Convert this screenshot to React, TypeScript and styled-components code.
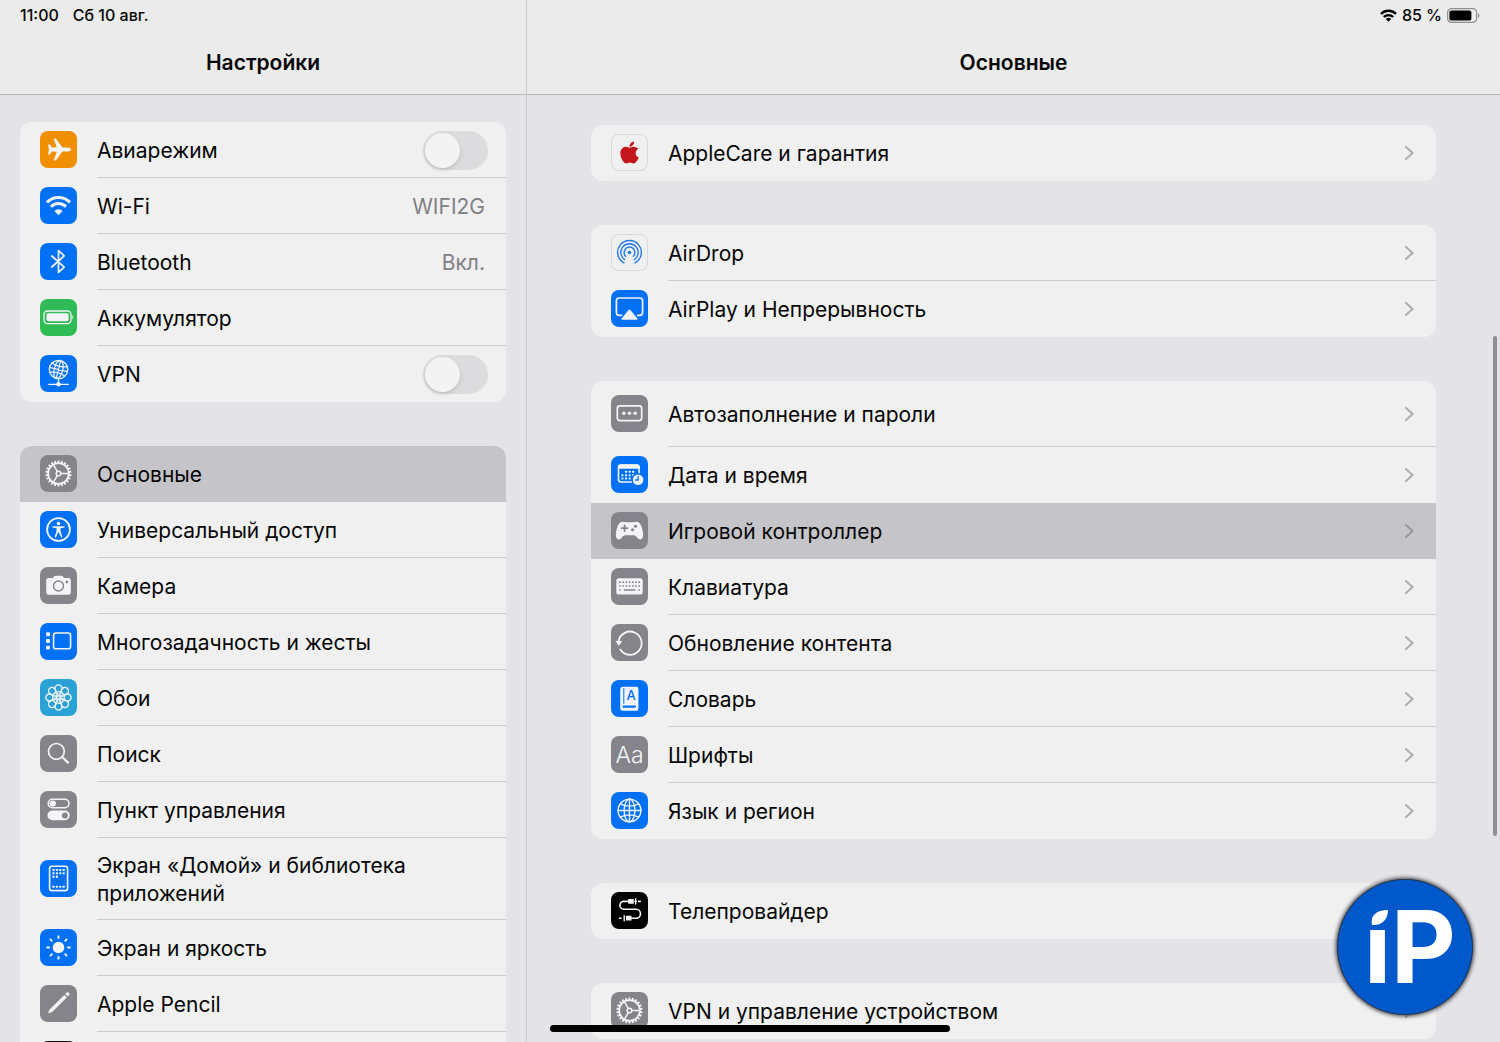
import React, { ReactNode } from "react";
import styled, { createGlobalStyle, css } from "styled-components";
import { FaApple } from "react-icons/fa";

const color = {
  page: "#e4e3e8",
  bar: "#eaebea",
  card: "#f0f0f0",
  selected: "#c5c4c9",
  line: "#cdcdcf",
  barLine: "#b9b9bc",
  text: "#060606",
  muted: "#808084",
  blue: "#0070f5",
  gray: "#85848a",
  orange: "#f08f00",
  green: "#2fbb55",
  cyan: "#2ba2d6",
  ink: "#f2f4f7",
};

const GlobalStyle = createGlobalStyle`
  *, *::before, *::after { box-sizing: border-box; }
  body {
    margin: 0;
    background: ${color.page};
    color: ${color.text};
    font-family: Inter, "Noto Sans", sans-serif;
    -webkit-font-smoothing: antialiased;
  }
`;

/* ---------- layout ---------- */

const Screen = styled.div`
  position: relative;
  display: grid;
  grid-template-columns: minmax(320px, 527px) minmax(0, 1fr);
  height: 100vh;
  overflow: hidden;
`;

const Pane = styled.section<{ $divided?: boolean }>`
  display: flex;
  flex-direction: column;
  min-width: 0;
  min-height: 0;
  ${(p) => p.$divided && css`border-right: 1px solid #c9c9cd;`}
`;

const PaneHeader = styled.header`
  flex: none;
  background: ${color.bar};
  border-bottom: 1px solid ${color.barLine};
`;

const StatusBar = styled.div<{ $end?: boolean }>`
  display: flex;
  align-items: center;
  justify-content: ${(p) => (p.$end ? "flex-end" : "flex-start")};
  gap: ${(p) => (p.$end ? 5 : 14)}px;
  height: 30px;
  padding: 0 20px;
  font-size: 16px;
  line-height: 20px;
  font-weight: 500;
  white-space: nowrap;
`;

const Title = styled.h1`
  margin: 0;
  padding-top: 2px;
  font-size: 21px;
  font-weight: 600;
  line-height: 62px;
  text-align: center;
`;

const PaneBody = styled.div<{ $wide?: boolean }>`
  flex: 1;
  min-height: 0;
  overflow: hidden;
  display: flex;
  flex-direction: column;
  gap: 44px;
  padding: ${(p) => (p.$wide ? "30px 64px 0" : "27px 20px 0")};
`;

const Group = styled.ul`
  flex: none;
  list-style: none;
  margin: 0;
  padding: 0;
  border-radius: 12px;
  background: ${color.card};
  overflow: hidden;
`;

/* ---------- rows ---------- */

const RowContent = styled.span<{ $tail: number }>`
  flex: 1;
  min-width: 0;
  display: flex;
  align-items: center;
  gap: 16px;
  padding-right: ${(p) => p.$tail}px;
  box-shadow: inset 0 -1px 0 ${color.line};
`;

const rowStyle = css<{ $selected?: boolean; $height: number; $plain?: boolean }>`
  display: flex;
  gap: 20px;
  min-height: ${(p) => p.$height}px;
  padding-left: 20px;
  color: inherit;
  text-decoration: none;
  background: ${(p) => (p.$selected ? color.selected : "transparent")};
  ${(p) => (p.$plain || p.$selected) && css`${RowContent} { box-shadow: none; }`}
`;

const LinkRow = styled.a`${rowStyle}`;
const SwitchRow = styled.label`${rowStyle}`;

const Label = styled.span`
  flex: 1;
  padding-top: 1px;
  font-size: 21px;
  line-height: 28px;
`;

const Value = styled.span`
  padding-top: 1px;
  font-size: 21px;
  line-height: 28px;
  color: ${color.muted};
`;

const Tile = styled.span<{ $bg: string }>`
  flex: none;
  align-self: center;
  display: grid;
  place-items: center;
  width: 37px;
  height: 37px;
  margin-bottom: 1px;
  overflow: hidden;
  border-radius: 8px;
  background: ${(p) => p.$bg};
  color: ${color.ink};
  ${(p) => p.$bg === color.card && css`box-shadow: inset 0 0 0 1px #d9d9dc;`}
`;

const FontSample = styled.span`
  font-size: 23px;
  font-weight: 300;
`;

const Switch = styled.input`
  appearance: none;
  flex: none;
  width: 65px;
  height: 39px;
  margin: 0;
  padding: 2px;
  border-radius: 20px;
  background: #dcdcde;
  &::before {
    content: "";
    display: block;
    width: 35px;
    height: 35px;
    border-radius: 50%;
    background: #f3f3f3;
    box-shadow: 0 2px 4px rgba(0, 0, 0, 0.14);
  }
  &:checked { background: ${color.green}; }
  &:checked::before { margin-left: auto; }
`;

/* ---------- overlays ---------- */

const ScrollThumb = styled.div`
  position: absolute;
  top: 336px;
  right: 3px;
  width: 4px;
  height: 500px;
  border-radius: 2px;
  background: #8f8f94;
`;

const HomeIndicator = styled.div`
  position: absolute;
  bottom: 10px;
  left: 50%;
  width: 400px;
  height: 7px;
  margin-left: -200px;
  border-radius: 4px;
  background: #000;
`;

const Badge = styled.div`
  position: absolute;
  right: 28px;
  bottom: 28px;
  width: 134px;
  height: 134px;
  border-radius: 50%;
  background: #0058cb;
  box-shadow: 0 0 0 1px #243550, 0 0 4px 2px #303338;
`;

/* ---------- icons ---------- */

const Glyph = ({ children, w = 1.6 }: { children: ReactNode; w?: number }) => (
  <svg width="37" height="37" viewBox="0 0 37 37" fill="none" stroke="currentColor" strokeWidth={w} strokeLinecap="round" strokeLinejoin="round" aria-hidden="true">
    {children}
  </svg>
);

const Solid = ({ d }: { d: string }) => <path d={d} fill="currentColor" stroke="none" />;

const dots = (points: number[][], size: number, fill = "currentColor") =>
  points.map(([x, y]) => (
    <rect key={`${x}-${y}`} x={x - size / 2} y={y - size / 2} width={size} height={size} rx={size / 4} fill={fill} stroke="none" />
  ));

const turns = (n: number) => Array.from({ length: n }, (_, i) => (360 / n) * i);

const Plane = () => (
  <Glyph>
    <Solid d="M31.2 18.5C31.2 17.2 28.8 16.4 26.6 16.4H22.4L16.4 8.2C16 7.7 15.6 7.5 15 7.5H13.6L16.8 16.3L12.1 16.5L9.7 13.5H8.1L8.9 18.5L8.1 23.5H9.7L12.1 20.5L16.8 20.7L13.6 29.5H15C15.6 29.5 16 29.3 16.4 28.8L22.4 20.6H26.6C28.8 20.6 31.2 19.8 31.2 18.5Z" />
  </Glyph>
);

const Wifi = () => (
  <Glyph w={3}>
    <path strokeLinecap="butt" d="M7 15.4A16.2 16.2 0 0 1 30 15.4M11 19.8A10.4 10.4 0 0 1 26 19.8" />
    <Solid d="M18.5 28.2L14.4 24A5.6 5.6 0 0 1 22.6 24Z" />
  </Glyph>
);

const Bluetooth = () => (
  <Glyph w={1.7}>
    <path d="M11.8 13L24.2 24.2L18.5 29.4V7.6L24.2 12.8L11.8 24" />
  </Glyph>
);

const Battery = () => (
  <Glyph w={1.3}>
    <rect x="4" y="12" width="27" height="12.6" rx="3.6" />
    <rect x="6.4" y="14.3" width="22.2" height="8" rx="1.6" fill="currentColor" stroke="none" />
    <Solid d="M32.3 16.3C33.7 16.8 33.7 19.8 32.3 20.3Z" />
  </Glyph>
);

const VpnGlobe = () => (
  <Glyph w={1.3}>
    <circle cx="18.5" cy="14.5" r="9.2" />
    <g transform="rotate(14 18.5 14.5)">
      <ellipse cx="18.5" cy="14.5" rx="4.3" ry="9.2" />
      <path d="M18.5 5.3V23.7M9.3 14.5H27.7M11 9.6Q18.5 12.8 26 9.6M11 19.4Q18.5 16.2 26 19.4" />
    </g>
    <path d="M18.5 24V29M8.8 29.3H28.3" />
    <circle cx="18.5" cy="29.3" r="2.3" fill="currentColor" stroke="none" />
  </Glyph>
);

const Gear = () => (
  <Glyph w={1.5}>
    <circle cx="18.5" cy="18.5" r="10.3" strokeWidth="1.7" />
    {turns(22).map((a) => (
      <path key={a} strokeLinecap="butt" strokeWidth="1.8" d="M18.5 8V5.4" transform={`rotate(${a} 18.5 18.5)`} />
    ))}
    <circle cx="18.5" cy="18.5" r="2.3" />
    {[90, 210, 330].map((a) => (
      <path key={a} d="M18.5 16V8.4" transform={`rotate(${a} 18.5 18.5)`} />
    ))}
  </Glyph>
);

const Accessibility = () => (
  <Glyph w={1.8}>
    <circle cx="18.5" cy="18.5" r="11.4" />
    <circle cx="18.5" cy="12.5" r="1.8" fill="currentColor" stroke="none" />
    <Solid d="M12.4 15.2L16.8 15.3H20.2L24.6 15.2V16.4L20.5 17.2V20L22.4 26.3L21.2 26.7L18.8 21.3H18.2L15.8 26.7L14.6 26.3L16.5 20V17.2L12.4 16.4Z" />
  </Glyph>
);

const Camera = () => (
  <Glyph>
    <Solid d="M8.4 10.9H12.6L14.1 9.3Q14.6 8.7 15.4 8.7H21.4Q22.2 8.7 22.7 9.3L24.2 10.9H28.6Q30.8 10.9 30.8 13.1V25.5Q30.8 27.7 28.6 27.7H8.4Q6.2 27.7 6.2 25.5V13.1Q6.2 10.9 8.4 10.9Z" />
    <circle cx="18.5" cy="19" r="5" stroke={color.gray} strokeWidth="1.4" />
    <circle cx="26.9" cy="14.9" r="1.3" fill={color.gray} stroke="none" />
  </Glyph>
);

const Multitask = () => (
  <Glyph>
    {dots([[8, 11.2], [8, 18], [8, 24.6]], 3.9)}
    <rect x="13.6" y="10" width="17" height="15.8" rx="2.4" />
  </Glyph>
);

const Flower = () => (
  <Glyph w={1.4}>
    {turns(8).map((a) => (
      <g key={a} transform={`rotate(${a} 18.5 18.5)`}>
        <circle cx="18.5" cy="9.4" r="3.5" />
        <path d="M18.5 17L16.4 12.4M18.5 17L20.6 12.4" strokeWidth="1" />
      </g>
    ))}
    <circle cx="18.5" cy="18.5" r="1.8" fill={color.cyan} />
  </Glyph>
);

const Search = () => (
  <Glyph w={1.7}>
    <circle cx="16.4" cy="16.4" r="7.9" />
    <path d="M22.4 22.2L28 27.6" strokeWidth="2.2" />
  </Glyph>
);

const Toggles = () => (
  <Glyph w={1.5}>
    <rect x="8.2" y="8.3" width="20.8" height="8.4" rx="4.2" />
    <circle cx="12.8" cy="12.5" r="3.1" fill="currentColor" stroke="none" />
    <rect x="7.5" y="19.6" width="22.2" height="9.6" rx="4.8" fill="currentColor" stroke="none" />
    <circle cx="24.9" cy="24.4" r="3" fill={color.gray} stroke="none" />
  </Glyph>
);

const HomeScreen = () => (
  <Glyph>
    <rect x="9.6" y="6.2" width="18" height="24.4" rx="2.4" />
    {dots([[13.5, 10], [16.9, 10], [20.3, 10], [23.7, 10], [13.5, 13.3], [16.9, 13.3], [20.3, 13.3], [23.7, 13.3], [13.5, 16.6], [16.9, 16.6], [13.5, 26.7], [16.9, 26.7], [20.3, 26.7], [23.7, 26.7]], 2.1)}
  </Glyph>
);

const Sun = () => (
  <Glyph w={1.9}>
    <circle cx="18.5" cy="18.5" r="5.8" fill="currentColor" stroke="none" />
    {turns(8).map((a) => (
      <path key={a} strokeLinecap="butt" d="M18.5 9.8V6.4" transform={`rotate(${a} 18.5 18.5)`} />
    ))}
  </Glyph>
);

const Pencil = () => (
  <Glyph>
    <Solid d="M8 28.6L9.6 24.6L24.3 9.9L26.8 12.4L12.1 27.1Z" />
    <Solid d="M25.2 9L26.6 7.6Q27.8 6.6 29 7.8Q30.1 9 29.1 10.1L27.7 11.5Z" />
  </Glyph>
);

const AirDrop = () => (
  <Glyph w={1.4}>
    <g stroke="#1f78ea">
      <path d="M12.9 28.9A11.9 11.9 0 1 1 24.1 28.9" />
      <path d="M13.6 25.6A8.7 8.7 0 1 1 23.4 25.6" />
      <path d="M14.7 22.3A5.4 5.4 0 1 1 22.3 22.3" />
      <circle cx="18.5" cy="18.5" r="1.8" fill="#1f78ea" stroke="none" />
    </g>
  </Glyph>
);

const AirPlay = () => (
  <Glyph w={1.7}>
    <path d="M10.4 25.4H8.2Q5.4 25.4 5.4 22.6V10.8Q5.4 8 8.2 8H28.8Q31.6 8 31.6 10.8V22.6Q31.6 25.4 28.8 25.4H26.6" />
    <Solid d="M17.6 20Q18.5 19.2 19.4 20L26.4 28.4Q26.8 29.8 25.6 29.8H11.4Q10.2 29.8 10.6 28.4Z" />
  </Glyph>
);

const Passwords = () => (
  <Glyph w={1.7}>
    <rect x="6.3" y="10.8" width="24.4" height="14.8" rx="2.6" />
    {[12.8, 18.5, 24.2].map((x) => (
      <circle key={x} cx={x} cy="18.2" r="1.8" fill="currentColor" stroke="none" />
    ))}
  </Glyph>
);

const CalendarClock = () => (
  <Glyph>
    <rect x="7.5" y="9" width="20.6" height="17" rx="2.4" />
    <Solid d="M7 12.8V10.6Q7 8.4 9.4 8.4H26.2Q28.6 8.4 28.6 10.6V12.8Z" />
    {dots([[15, 15.8], [18.6, 15.8], [22.2, 15.8], [11.4, 19.2], [15, 19.2], [18.6, 19.2], [22.2, 19.2], [11.4, 22.6], [15, 22.6], [18.6, 22.6]], 2)}
    <circle cx="27.1" cy="23.7" r="6" fill="currentColor" stroke={color.blue} strokeWidth="1.4" />
    <path d="M27.1 20.4V24H24.6" stroke={color.blue} strokeWidth="1.3" />
  </Glyph>
);

const Gamepad = () => (
  <Glyph w={1.8}>
    <Solid d="M10.6 9.9C12.4 9.4 13.4 10.2 15 10.2H22C23.6 10.2 24.6 9.4 26.4 9.9C29 10.4 30.4 13.4 31.4 17.6C32.4 21.6 32.8 26.6 29.8 27.4C26.8 28 25.6 23.2 22.8 23.2H14.2C11.4 23.2 10.2 28 7.2 27.4C4.2 26.6 4.6 21.6 5.6 17.6C6.6 13.4 8 10.4 10.6 9.9Z" />
    <path d="M13.6 13.4V19M10.8 16.2H16.4" stroke={color.gray} />
    <circle cx="24.5" cy="14.2" r="1.5" fill={color.gray} stroke="none" />
    <circle cx="21.5" cy="17.7" r="1.5" fill={color.gray} stroke="none" />
  </Glyph>
);

const Keyboard = () => (
  <Glyph>
    <rect x="5.3" y="10.3" width="26.4" height="16.2" rx="2.6" fill="currentColor" stroke="none" />
    {dots([9, 12.2, 15.4, 18.6, 21.8, 25, 28.2].flatMap((x) => [[x, 14.2], [x, 18]]), 1.7, color.gray)}
    {dots([[9, 22], [28.2, 22]], 1.7, color.gray)}
    <path d="M12.8 22H24.4" stroke={color.gray} strokeLinecap="butt" />
  </Glyph>
);

const Refresh = () => (
  <Glyph w={1.8}>
    <path d="M9.3 25.5A11.6 11.6 0 1 0 7.6 17.2" />
    <Solid d="M4.4 17H11.2L7.8 22Z" />
  </Glyph>
);

const Dictionary = () => (
  <Glyph>
    <Solid d="M11.6 6.7H25.4Q27.4 6.7 27.4 8.7V28.6H27V30.7H11.6Q9.2 30.7 9.2 28V9.2Q9.2 6.7 11.6 6.7Z" />
    <path d="M12.8 8V23.6" stroke={color.blue} strokeWidth="1" strokeLinecap="butt" />
    <path d="M11.6 26.7H24.8" stroke={color.blue} strokeWidth="2.2" strokeLinecap="butt" />
    <text x="20" y="20.4" fill={color.blue} stroke="none" fontSize="13" fontWeight="500" textAnchor="middle">A</text>
  </Glyph>
);

const Globe = () => (
  <Glyph w={1.4}>
    <circle cx="18.5" cy="18.5" r="11.4" />
    <ellipse cx="18.5" cy="18.5" rx="5.4" ry="11.4" />
    <path d="M18.5 7V30M7 18.5H30M9.4 11.8Q18.5 16.4 27.6 11.8M9.4 25.2Q18.5 20.6 27.6 25.2" />
  </Glyph>
);

const Cable = () => (
  <Glyph>
    <path d="M17.4 9.4H12.8A3.9 3.9 0 0 0 12.8 17.2H25A4.5 4.5 0 0 1 25 26.2H20M24 9.4H25M27.6 9.4H29.2M8.4 26.2H10" />
    <path strokeWidth="1.4" d="M24.7 6.8V12M13.2 23.6V28.8" />
    <Solid d="M17.2 7H22.8V11.8H17.2ZM14.9 23.8H20.5V28.6H14.9Z" />
  </Glyph>
);

const Rings = () => (
  <Glyph w={3}>
    <circle cx="18.5" cy="18.5" r="15" stroke="#b23256" />
  </Glyph>
);

const Chevron = ({ dark }: { dark?: boolean }) => (
  <svg width="11" height="16" viewBox="0 0 11 16" fill="none" stroke={dark ? "#9a9a9f" : "#afafb3"} strokeWidth="2.2" strokeLinecap="round" strokeLinejoin="round" aria-hidden="true">
    <path d="M2 2L8.6 8L2 14" />
  </svg>
);

const StatusWifi = () => (
  <svg width="17" height="13" viewBox="0 0 17 13" fill="none" stroke="#000" strokeWidth="2.4" aria-hidden="true">
    <path d="M1 4.8A10.8 10.8 0 0 1 16 4.8M3.8 8A6.8 6.8 0 0 1 13.2 8" />
    <path d="M8.5 12.8L5.8 10.1A3.8 3.8 0 0 1 11.2 10.1Z" fill="#000" stroke="none" />
  </svg>
);

const StatusBattery = () => (
  <svg width="33" height="15" viewBox="0 0 33 15" aria-hidden="true">
    <rect x="0.6" y="0.6" width="29" height="13.8" rx="4" fill="none" stroke="#8f8f91" strokeWidth="1.2" />
    <rect x="2.4" y="2.4" width="22" height="10.2" rx="2.2" fill="#000" />
    <path d="M31 5.2C32.8 5.8 32.8 9.2 31 9.8Z" fill="#8f8f91" />
  </svg>
);

/* ---------- data ---------- */

type Item = {
  label?: string;
  bg: string;
  icon: ReactNode;
  value?: string;
  toggle?: boolean;
  selected?: boolean;
  height?: number;
};

const sidebar: Item[][] = [
  [
    { label: "Авиарежим", bg: color.orange, icon: <Plane />, toggle: true },
    { label: "Wi-Fi", bg: color.blue, icon: <Wifi />, value: "WIFI2G" },
    { label: "Bluetooth", bg: color.blue, icon: <Bluetooth />, value: "Вкл." },
    { label: "Аккумулятор", bg: color.green, icon: <Battery /> },
    { label: "VPN", bg: color.blue, icon: <VpnGlobe />, toggle: true },
  ],
  [
    { label: "Основные", bg: color.gray, icon: <Gear />, selected: true },
    { label: "Универсальный доступ", bg: color.blue, icon: <Accessibility /> },
    { label: "Камера", bg: color.gray, icon: <Camera /> },
    { label: "Многозадачность и жесты", bg: color.blue, icon: <Multitask /> },
    { label: "Обои", bg: color.cyan, icon: <Flower /> },
    { label: "Поиск", bg: color.gray, icon: <Search /> },
    { label: "Пункт управления", bg: color.gray, icon: <Toggles /> },
    { label: "Экран «Домой» и библиотека приложений", bg: color.blue, icon: <HomeScreen />, height: 82 },
    { label: "Экран и яркость", bg: color.blue, icon: <Sun /> },
    { label: "Apple Pencil", bg: color.gray, icon: <Pencil /> },
    { bg: "#101012", icon: <Rings /> },
  ],
];

const general: Item[][] = [
  [{ label: "AppleCare и гарантия", bg: color.card, icon: <FaApple size={25} color="#c4161f" /> }],
  [
    { label: "AirDrop", bg: color.card, icon: <AirDrop /> },
    { label: "AirPlay и Непрерывность", bg: color.blue, icon: <AirPlay /> },
  ],
  [
    { label: "Автозаполнение и пароли", bg: color.gray, icon: <Passwords />, height: 66 },
    { label: "Дата и время", bg: color.blue, icon: <CalendarClock /> },
    { label: "Игровой контроллер", bg: color.gray, icon: <Gamepad />, selected: true },
    { label: "Клавиатура", bg: color.gray, icon: <Keyboard /> },
    { label: "Обновление контента", bg: color.gray, icon: <Refresh /> },
    { label: "Словарь", bg: color.blue, icon: <Dictionary /> },
    { label: "Шрифты", bg: color.gray, icon: <FontSample>Aa</FontSample> },
    { label: "Язык и регион", bg: color.blue, icon: <Globe /> },
  ],
  [{ label: "Телепровайдер", bg: "#000", icon: <Cable /> }],
  [{ label: "VPN и управление устройством", bg: color.gray, icon: <Gear /> }],
];

function Groups({ groups, chevrons }: { groups: Item[][]; chevrons?: boolean }) {
  return (
    <>
      {groups.map((items, g) => (
        <Group key={g}>
          {items.map((item, i) => {
            const next = items[i + 1];
            const look = {
              $selected: item.selected,
              $height: item.height ?? 56,
              $plain: !next || next.selected,
            };
            const content = (
              <>
                <Tile $bg={item.bg}>{item.icon}</Tile>
                <RowContent $tail={item.toggle ? 18 : 21}>
                  {item.label && <Label>{item.label}</Label>}
                  {item.value && <Value>{item.value}</Value>}
                  {item.toggle && <Switch type="checkbox" role="switch" />}
                  {chevrons && <Chevron dark={item.selected} />}
                </RowContent>
              </>
            );
            return (
              <li key={i}>
                {item.toggle ? (
                  <SwitchRow {...look}>{content}</SwitchRow>
                ) : (
                  <LinkRow href="#" aria-current={item.selected ? "page" : undefined} {...look}>
                    {content}
                  </LinkRow>
                )}
              </li>
            );
          })}
        </Group>
      ))}
    </>
  );
}

export default function App() {
  return (
    <>
      <GlobalStyle />
      <Screen>
        <Pane $divided>
          <PaneHeader>
            <StatusBar>
              <span>11:00</span>
              <span>Сб 10 авг.</span>
            </StatusBar>
            <Title>Настройки</Title>
          </PaneHeader>
          <PaneBody>
            <Groups groups={sidebar} />
          </PaneBody>
        </Pane>
        <Pane>
          <PaneHeader>
            <StatusBar $end>
              <StatusWifi />
              <span>85 %</span>
              <StatusBattery />
            </StatusBar>
            <Title>Основные</Title>
          </PaneHeader>
          <PaneBody $wide>
            <Groups groups={general} chevrons />
          </PaneBody>
        </Pane>
        <ScrollThumb />
        <HomeIndicator />
        <Badge>
          <svg width="134" height="134" viewBox="0 0 134 134">
            <text x="26" y="103" fill="#fff" fontSize="100" fontWeight="700">iP</text>
            <rect x="28" y="24" width="24" height="26" fill="#0058cb" />
            <path d="M50 30C50 39 44 46 34 45C32 36 38 30 50 30Z" fill="#fff" />
          </svg>
        </Badge>
      </Screen>
    </>
  );
}
